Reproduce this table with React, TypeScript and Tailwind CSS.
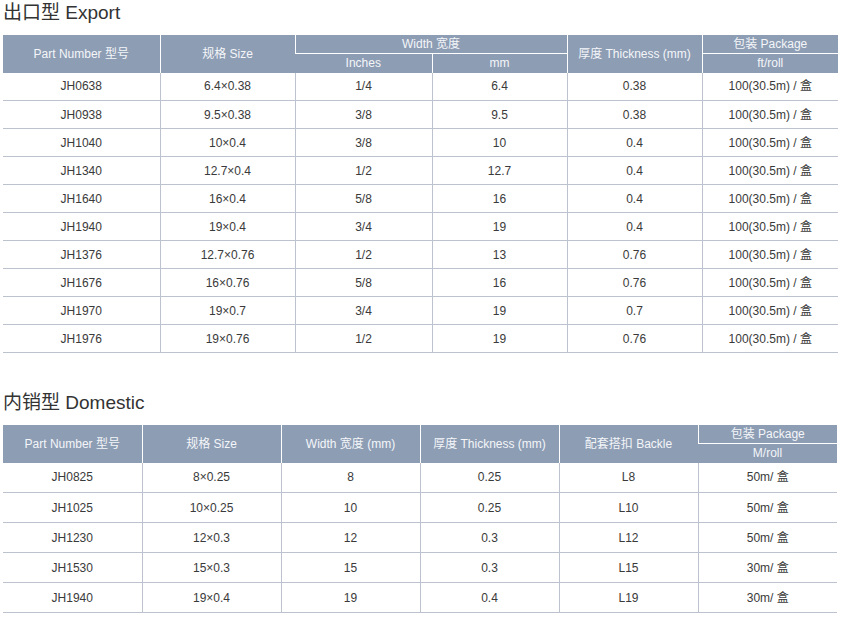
const exportRows = [
  ['JH0638', '6.4×0.38', '1/4', '6.4', '0.38'],
  ['JH0938', '9.5×0.38', '3/8', '9.5', '0.38'],
  ['JH1040', '10×0.4', '3/8', '10', '0.4'],
  ['JH1340', '12.7×0.4', '1/2', '12.7', '0.4'],
  ['JH1640', '16×0.4', '5/8', '16', '0.4'],
  ['JH1940', '19×0.4', '3/4', '19', '0.4'],
  ['JH1376', '12.7×0.76', '1/2', '13', '0.76'],
  ['JH1676', '16×0.76', '5/8', '16', '0.76'],
  ['JH1970', '19×0.7', '3/4', '19', '0.7'],
  ['JH1976', '19×0.76', '1/2', '19', '0.76'],
];

const domesticRows = [
  ['JH0825', '8×0.25', '8', '0.25', 'L8', '50m/ 盒'],
  ['JH1025', '10×0.25', '10', '0.25', 'L10', '50m/ 盒'],
  ['JH1230', '12×0.3', '12', '0.3', 'L12', '50m/ 盒'],
  ['JH1530', '15×0.3', '15', '0.3', 'L15', '30m/ 盒'],
  ['JH1940', '19×0.4', '19', '0.4', 'L19', '30m/ 盒'],
];

const th = 'bg-[#8d9db4] text-[#f4f6f9] font-normal text-[12px] border-l border-white first:border-l-0 p-0';
const td = 'text-[12px] text-[#3a3a3a] border-b border-[#bcc3cf] border-l first:border-l-0 p-0 text-center';

export default function App() {
  return (
    <div
      className="w-[842px] h-[617px] bg-white px-[3px] pt-0"
      style={{ fontFamily: '"Liberation Sans", "Noto Sans CJK SC", sans-serif' }}
    >
      <h2 className="h-[35px] pt-[1px] text-[19px] leading-[24px] text-[#333]">出口型 Export</h2>
      <table className="w-[835px] border-collapse table-fixed text-center">
        <colgroup>
          <col className="w-[157px]" />
          <col className="w-[135px]" />
          <col className="w-[137px]" />
          <col className="w-[135px]" />
          <col className="w-[135px]" />
          <col className="w-[136px]" />
        </colgroup>
        <thead>
          <tr className="h-[18px]">
            <th rowSpan={2} className={th}>Part Number 型号</th>
            <th rowSpan={2} className={th}>规格 Size</th>
            <th colSpan={2} className={th + ' border-b'}>Width 宽度</th>
            <th rowSpan={2} className={th}>厚度 Thickness (mm)</th>
            <th className={th + ' border-b'}>包装 Package</th>
          </tr>
          <tr className="h-[19px]">
            <th className={th + ' !border-l-0'}>Inches</th>
            <th className={th}>mm</th>
            <th className={th}>ft/roll</th>
          </tr>
        </thead>
        <tbody>
          {exportRows.map((r) => (
            <tr key={r[0]} className="h-[28px]">
              {r.map((c, i) => (
                <td key={i} className={td}>{c}</td>
              ))}
              <td className={td}>100(30.5m) / 盒</td>
            </tr>
          ))}
        </tbody>
      </table>

      <h2 className="mt-[38px] h-[34px] text-[19px] leading-[24px] text-[#333]">内销型 Domestic</h2>
      <table className="w-[834px] border-collapse table-fixed text-center">
        <colgroup>
          <col className="w-[139px]" />
          <col className="w-[139px]" />
          <col className="w-[139px]" />
          <col className="w-[139px]" />
          <col className="w-[139px]" />
          <col className="w-[139px]" />
        </colgroup>
        <thead>
          <tr className="h-[18px]">
            <th rowSpan={2} className={th}>Part Number 型号</th>
            <th rowSpan={2} className={th}>规格 Size</th>
            <th rowSpan={2} className={th}>Width 宽度 (mm)</th>
            <th rowSpan={2} className={th}>厚度 Thickness (mm)</th>
            <th rowSpan={2} className={th}>配套搭扣 Backle</th>
            <th className={th + ' border-b'}>包装 Package</th>
          </tr>
          <tr className="h-[19px]">
            <th className={th}>M/roll</th>
          </tr>
        </thead>
        <tbody>
          {domesticRows.map((r) => (
            <tr key={r[0]} className="h-[30px]">
              {r.map((c, i) => (
                <td key={i} className={td}>{c}</td>
              ))}
            </tr>
          ))}
        </tbody>
      </table>
    </div>
  );
}
